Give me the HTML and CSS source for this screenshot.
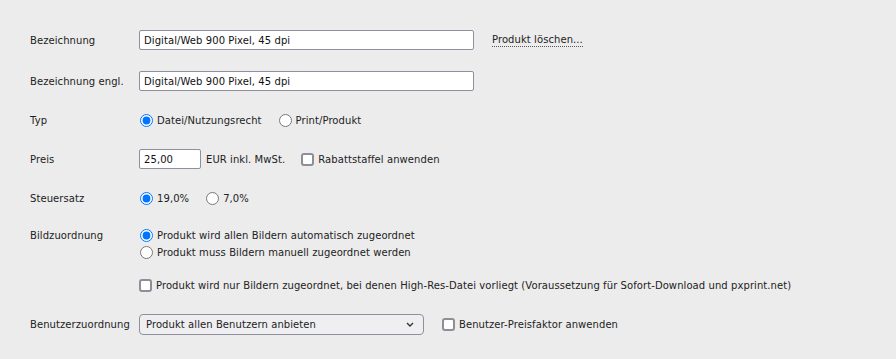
FILE: index.html
```html
<html>
<head>
	<link rel="stylesheet" href="styles.css">
</head>
<body>
	<form class='product'>
		<div class='row first'>
			<div class='label'>Bezeichnung</div>
			<div class='field'>
				<input class='text wide' type='text' value='Digital/Web 900 Pixel, 45 dpi'>
				<a class='delete' href='#'>Produkt löschen...</a>
			</div>
		</div>
		<div class='row'>
			<div class='label'>Bezeichnung engl.</div>
			<div class='field'>
				<input class='text wide' type='text' value='Digital/Web 900 Pixel, 45 dpi'>
			</div>
		</div>
		<div class='row'>
			<div class='label'>Typ</div>
			<div class='field'>
				<label class='opt'><input type='radio' name='typ' checked>Datei/Nutzungsrecht</label>
				<label class='opt'><input type='radio' name='typ'>Print/Produkt</label>
			</div>
		</div>
		<div class='row'>
			<div class='label'>Preis</div>
			<div class='field'>
				<input class='text price' type='text' value='25,00'>
				<span class='unit'>EUR inkl. MwSt.</span>
				<label class='opt'><input type='checkbox'>Rabattstaffel anwenden</label>
			</div>
		</div>
		<div class='row'>
			<div class='label'>Steuersatz</div>
			<div class='field'>
				<label class='opt'><input type='radio' name='tax' checked>19,0%</label>
				<label class='opt tight'><input type='radio' name='tax'>7,0%</label>
			</div>
		</div>
		<div class='row multi'>
			<div class='label'>Bildzuordnung</div>
			<div class='field stack'>
				<label class='opt'><input type='radio' name='bild' checked>Produkt wird allen Bildern automatisch zugeordnet</label>
				<label class='opt'><input type='radio' name='bild'>Produkt muss Bildern manuell zugeordnet werden</label>
			</div>
		</div>
		<div class='row sub'>
			<div class='label'></div>
			<div class='field'>
				<label class='opt'><input type='checkbox'>Produkt wird nur Bildern zugeordnet, bei denen High-Res-Datei vorliegt (Voraussetzung für Sofort-Download und pxprint.net)</label>
			</div>
		</div>
		<div class='row'>
			<div class='label'>Benutzerzuordnung</div>
			<div class='field'>
				<div class='select'>
					<span>Produkt allen Benutzern anbieten</span>
					<svg width='8' height='5' viewBox='0 0 8 5'><path d='M1 1 L4 4 L7 1' fill='none' stroke='#333' stroke-width='1.4'/></svg>
				</div>
				<label class='opt'><input type='checkbox'>Benutzer-Preisfaktor anwenden</label>
			</div>
		</div>
	</form>
</body>
</html>
```

FILE: styles.css
```css
body {
	margin: 0;
	background-color: #ececec;
	font-family: 'DejaVu Sans', Verdana, sans-serif;
	font-size: 10px;
	letter-spacing: 0.08px;
	color: #222;
}

.product {
	padding: 30px 0 0 30px;
	margin: 0;
}

.row {
	display: flex;
	align-items: center;
	min-height: 20px;
	margin-bottom: 19px;
}

.row.first {
	margin-bottom: 21px;
}

.row.multi {
	align-items: flex-start;
	margin-bottom: 14px;
}

.label {
	width: 109px;
	flex: none;
}

.multi .label {
	line-height: 17px;
}

.field {
	display: flex;
	align-items: center;
}

.stack {
	flex-direction: column;
	align-items: flex-start;
}

.stack .opt {
	height: 17px;
	margin-right: 0;
}

.text {
	box-sizing: border-box;
	height: 20px;
	border: 1px solid #8f8f9d;
	border-radius: 2px;
	background: white;
	font-family: inherit;
	font-size: 10px;
	letter-spacing: inherit;
	color: #111;
	padding: 0 4px;
	margin: 0;
}

.wide {
	width: 335px;
}

.price {
	width: 62px;
}

.delete {
	margin-left: 18px;
	color: #222;
	text-decoration: none;
	border-bottom: 1px dotted #555;
	line-height: 13px;
}

.unit {
	margin: 0 16px 0 5px;
}

.opt {
	display: flex;
	align-items: center;
	margin-right: 16px;
}

.opt input {
	margin: 0 4px 0 1px;
	width: 13px;
	height: 13px;
}

.opt input[type='checkbox'] {
	appearance: none;
	box-sizing: border-box;
	border: 2px solid #8e8e99;
	border-radius: 3px;
	background: white;
	margin-left: 0;
}

.select {
	box-sizing: border-box;
	width: 285px;
	height: 21px;
	border: 1px solid #8f8f9d;
	border-radius: 4px;
	background: #efeff2;
	display: flex;
	align-items: center;
	justify-content: space-between;
	padding: 0 9px 0 6px;
	margin-right: 18px;
}
```
